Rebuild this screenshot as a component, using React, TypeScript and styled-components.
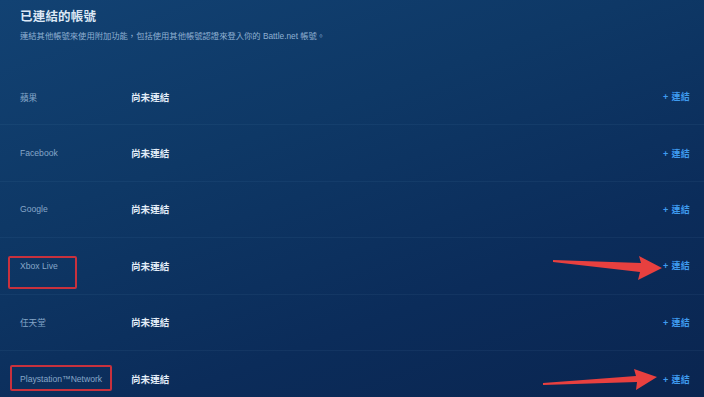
import styled, { createGlobalStyle } from "styled-components"

const GlobalStyle = createGlobalStyle`
  html, body {
    margin: 0;
    padding: 0;
    width: 704px;
    height: 397px;
    overflow: hidden;
  }
  body {
    font-family: "Liberation Sans", "Noto Sans CJK TC", sans-serif;
  }
`

const Page = styled.div`
  position: relative;
  width: 704px;
  height: 397px;
  overflow: hidden;
  box-sizing: border-box;
  padding: 8px 14px 0 20px;
  background: linear-gradient(160deg, #124273 0%, #0e3866 35%, #0b2c5a 70%, #0a2550 100%);
`

const Title = styled.h1`
  margin: 0;
  font-size: 12.5px;
  line-height: 18px;
  font-weight: 700;
  color: #dce8f5;
  letter-spacing: 0.2px;
`

const Subtitle = styled.p`
  margin: 2px 0 0;
  font-size: 8.3px;
  line-height: 16px;
  color: #8fb0d2;
`

const List = styled.div`
  margin-top: 25px;
  display: flex;
  flex-direction: column;
`

const Row = styled.div`
  box-sizing: border-box;
  height: 56.4px;
  display: grid;
  grid-template-columns: 111px 1fr auto;
  align-items: center;
  border-bottom: 1px solid rgba(120, 160, 210, 0.08);
  margin-right: -14px;
  margin-left: -20px;
  padding: 0 14px 0 20px;

  &:last-child {
    border-bottom: none;
  }
`

const Label = styled.span`
  font-size: 8.6px;
  color: #86a6c8;
`

const Status = styled.span`
  font-size: 9.6px;
  font-weight: 700;
  color: #e4eef9;
`

const LinkButton = styled.span`
  font-size: 9px;
  color: #3f9bf0;
  font-weight: 700;
  letter-spacing: 0.3px;
`

const Mark = styled.div<{ $x: number; $y: number; $w: number; $h: number }>`
  position: absolute;
  left: ${p => p.$x}px;
  top: ${p => p.$y}px;
  width: ${p => p.$w}px;
  height: ${p => p.$h}px;
  box-sizing: border-box;
  border: 2px solid #c8313d;
  border-radius: 2px;
`

const Overlay = styled.svg`
  position: absolute;
  left: 0;
  top: 0;
  pointer-events: none;
`

const accounts = ["蘋果", "Facebook", "Google", "Xbox Live", "任天堂", "Playstation™Network"]

export default function App() {
  return (
    <>
      <GlobalStyle />
      <Page>
        <Title>已連結的帳號</Title>
        <Subtitle>連結其他帳號來使用附加功能，包括使用其他帳號認證來登入你的 Battle.net 帳號。</Subtitle>
        <List>
          {accounts.map(name => (
            <Row key={name}>
              <Label>{name}</Label>
              <Status>尚未連結</Status>
              <LinkButton>+ 連結</LinkButton>
            </Row>
          ))}
        </List>

        <Mark $x={8} $y={256} $w={69} $h={33} />
        <Mark $x={10} $y={365} $w={102} $h={26} />

        <Overlay width="704" height="397" viewBox="0 0 704 397">
          <path d="M553 260 L641 263 L639 256 L662 268 L638 280 L640 272 L553 262 Z" fill="#e8403f" />
          <path d="M543 383 L636 376 L634 369 L657 377 L636 390 L637 382 L543 385 Z" fill="#e8403f" />
        </Overlay>
      </Page>
    </>
  )
}
